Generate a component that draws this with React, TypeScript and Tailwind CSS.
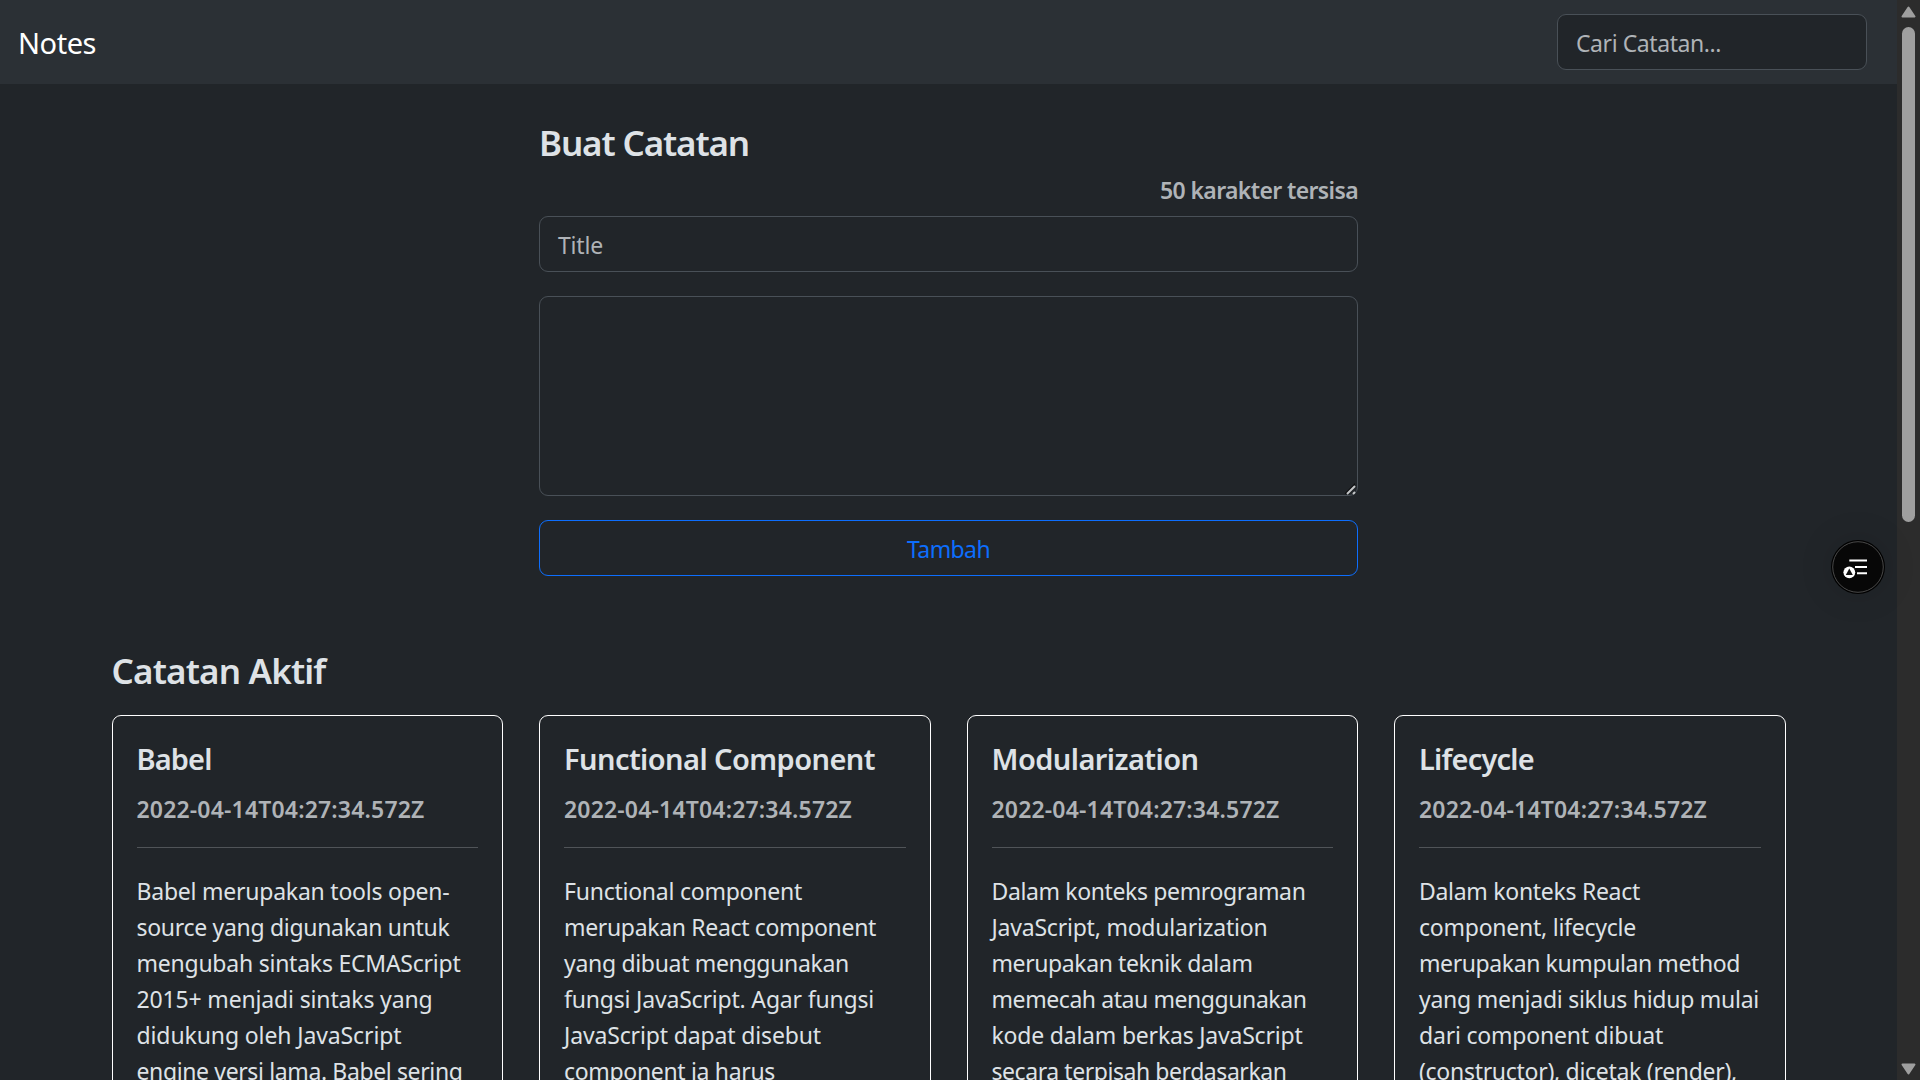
import { useLayoutEffect, useRef, useState } from "react";

type FitTextProps = { text: string; width: number; className?: string };

/** A single line of text whose tracking is adjusted so that it fills `width` pixels. */
function FitText({ text, width, className = "" }: FitTextProps) {
  const ref = useRef<HTMLSpanElement>(null);
  const [spacing, setSpacing] = useState(0);

  useLayoutEffect(() => {
    const el = ref.current;
    if (!el) return;
    el.style.letterSpacing = "0px";
    const natural = el.getBoundingClientRect().width;
    const next = (width - natural) / text.length;
    el.style.letterSpacing = `${next}px`;
    setSpacing(next);
  }, [text, width]);

  return (
    <span
      ref={ref}
      className={`inline-block whitespace-pre ${className}`}
      style={{ letterSpacing: `${spacing}px` }}
    >
      {text}
    </span>
  );
}

type Line = [text: string, width: number];
type Note = { title: Line; lines: Line[] };

const createdAt: Line = ["2022-04-14T04:27:34.572Z", 288];

const notes: Note[] = [
  {
    title: ["Babel", 75],
    lines: [
      ["Babel merupakan tools open-", 313],
      ["source yang digunakan untuk", 313],
      ["mengubah sintaks ECMAScript", 324],
      ["2015+ menjadi sintaks yang", 296],
      ["didukung oleh JavaScript", 265],
      ["engine versi lama. Babel sering", 326],
    ],
  },
  {
    title: ["Functional Component", 311],
    lines: [
      ["Functional component", 238],
      ["merupakan React component", 312],
      ["yang dibuat menggunakan", 285],
      ["fungsi JavaScript. Agar fungsi", 310],
      ["JavaScript dapat disebut", 257],
      ["component ia harus", 211],
    ],
  },
  {
    title: ["Modularization", 207],
    lines: [
      ["Dalam konteks pemrograman", 314],
      ["JavaScript, modularization", 276],
      ["merupakan teknik dalam", 261],
      ["memecah atau menggunakan", 315],
      ["kode dalam berkas JavaScript", 311],
      ["secara terpisah berdasarkan", 295],
    ],
  },
  {
    title: ["Lifecycle", 115],
    lines: [
      ["Dalam konteks React", 221],
      ["component, lifecycle", 217],
      ["merupakan kumpulan method", 321],
      ["yang menjadi siklus hidup mulai", 340],
      ["dari component dibuat", 244],
      ["(constructor), dicetak (render),", 318],
    ],
  },
];

function Navbar() {
  return (
    <header className="flex h-[84px] items-center justify-between bg-[#2b3035] pl-[18px] pr-[30px]">
      <a className="text-[29px] leading-[45px] text-white">
        <FitText text="Notes" width={78} />
      </a>
      <div className="flex h-14 w-[310px] items-center rounded-[9px] border border-[#495057] bg-[#212529] px-[18px] pt-0.5 text-[#afb3b7]">
        <FitText text="Cari Catatan..." width={145} />
      </div>
    </header>
  );
}

function NoteForm() {
  return (
    <form className="mx-auto flex w-[819px] flex-col pt-9">
      <h2 className="text-[35px] leading-[45px] font-semibold">
        <FitText text="Buat Catatan" width={210} />
      </h2>
      <div className="mt-[11px] mb-2.5 h-[30px] self-end leading-[29px] font-semibold text-[#afb3b7]">
        <FitText text="50 karakter tersisa" width={198} />
      </div>
      <div className="flex h-14 items-center rounded-[9px] border border-[#495057] px-[18px] pt-0.5 text-[#afb3b7]">
        <FitText text="Title" width={45} />
      </div>
      <div className="mt-6 flex h-[200px] items-end justify-end rounded-[9px] border border-[#495057]">
        <svg width="14" height="14" viewBox="0 0 14 14" className="-mr-px -mb-px">
          <path d="M1 11 11 1v4L5 12H1z" fill="#0c0d0e" />
          <path d="M3 12 11 4M9 12l2-2" stroke="#c4c6c8" strokeWidth="2" />
        </svg>
      </div>
      <button
        type="button"
        className="mt-6 h-14 rounded-[9px] border border-[#0d6efd] pt-0.5 text-[#0d6efd]"
      >
        <FitText text="Tambah" width={83} />
      </button>
    </form>
  );
}

function NoteCard({ note }: { note: Note }) {
  return (
    <article className="h-[600px] rounded-[9px] border border-white px-6 pt-[25px]">
      <h3 className="text-[29px] leading-9 font-semibold">
        <FitText text={note.title[0]} width={note.title[1]} />
      </h3>
      <h4 className="mt-[18px] leading-[29px] font-semibold text-[#afb3b7]">
        <FitText text={createdAt[0]} width={createdAt[1]} />
      </h4>
      <hr className="mt-[23px] mb-[25px] border-t border-[#505458]" />
      <p className="flex flex-col items-start leading-9">
        {note.lines.map(([text, width]) => (
          <FitText key={text} text={text} width={width} />
        ))}
      </p>
    </article>
  );
}

function ScrollBar() {
  return (
    <aside className="flex h-full w-[23px] flex-col items-center bg-[#2c2c2c]">
      <svg width="15" height="12" viewBox="0 0 15 12" className="mt-[6px] shrink-0">
        <path d="M7.5 1.5 13.5 10.5H1.5Z" fill="#9f9f9f" stroke="#9f9f9f" strokeWidth="2" strokeLinejoin="round" />
      </svg>
      <div className="mt-[9px] h-[495px] w-[13px] rounded-full bg-[#9f9f9f]" />
      <svg width="15" height="12" viewBox="0 0 15 12" className="mt-auto mb-[5px] shrink-0">
        <path d="M7.5 10.5 13.5 1.5H1.5Z" fill="#9f9f9f" stroke="#9f9f9f" strokeWidth="2" strokeLinejoin="round" />
      </svg>
    </aside>
  );
}

function FloatingMenuButton() {
  return (
    <button
      type="button"
      className="absolute top-[540px] left-[1831px] size-[54px] rounded-full bg-black shadow-[0_0_36px_rgba(0,0,0,0.12)]"
    >
      <svg width="54" height="54" viewBox="0 0 54 54">
        <circle cx="27" cy="27" r="25.3" fill="#070707" stroke="#4a4a4a" strokeWidth="1" />
        <path d="M18.3 20.6H36M24 27H36M26 33.3H36" stroke="#fff" strokeWidth="2" />
        <circle cx="18.3" cy="32.3" r="5.9" fill="#fff" />
        <path d="M18.3 28.6 21.8 35H14.8Z" fill="#111" />
      </svg>
    </button>
  );
}

export default function App() {
  return (
    <div className="relative flex h-[1080px] w-[1920px] overflow-hidden bg-[#212529] font-['Noto_Sans',sans-serif] text-[23px] text-[#dee2e6]">
      <div className="h-full w-[1897px] overflow-hidden">
        <Navbar />
        <NoteForm />
        <main className="mx-auto w-[1674px] pt-[73px]">
          <h2 className="text-[35px] leading-[43px] font-semibold">
            <FitText text="Catatan Aktif" width={214} />
          </h2>
          <div className="mt-[23px] grid grid-cols-4 gap-9">
            {notes.map((note) => (
              <NoteCard key={note.title[0]} note={note} />
            ))}
          </div>
        </main>
      </div>
      <ScrollBar />
      <FloatingMenuButton />
    </div>
  );
}
